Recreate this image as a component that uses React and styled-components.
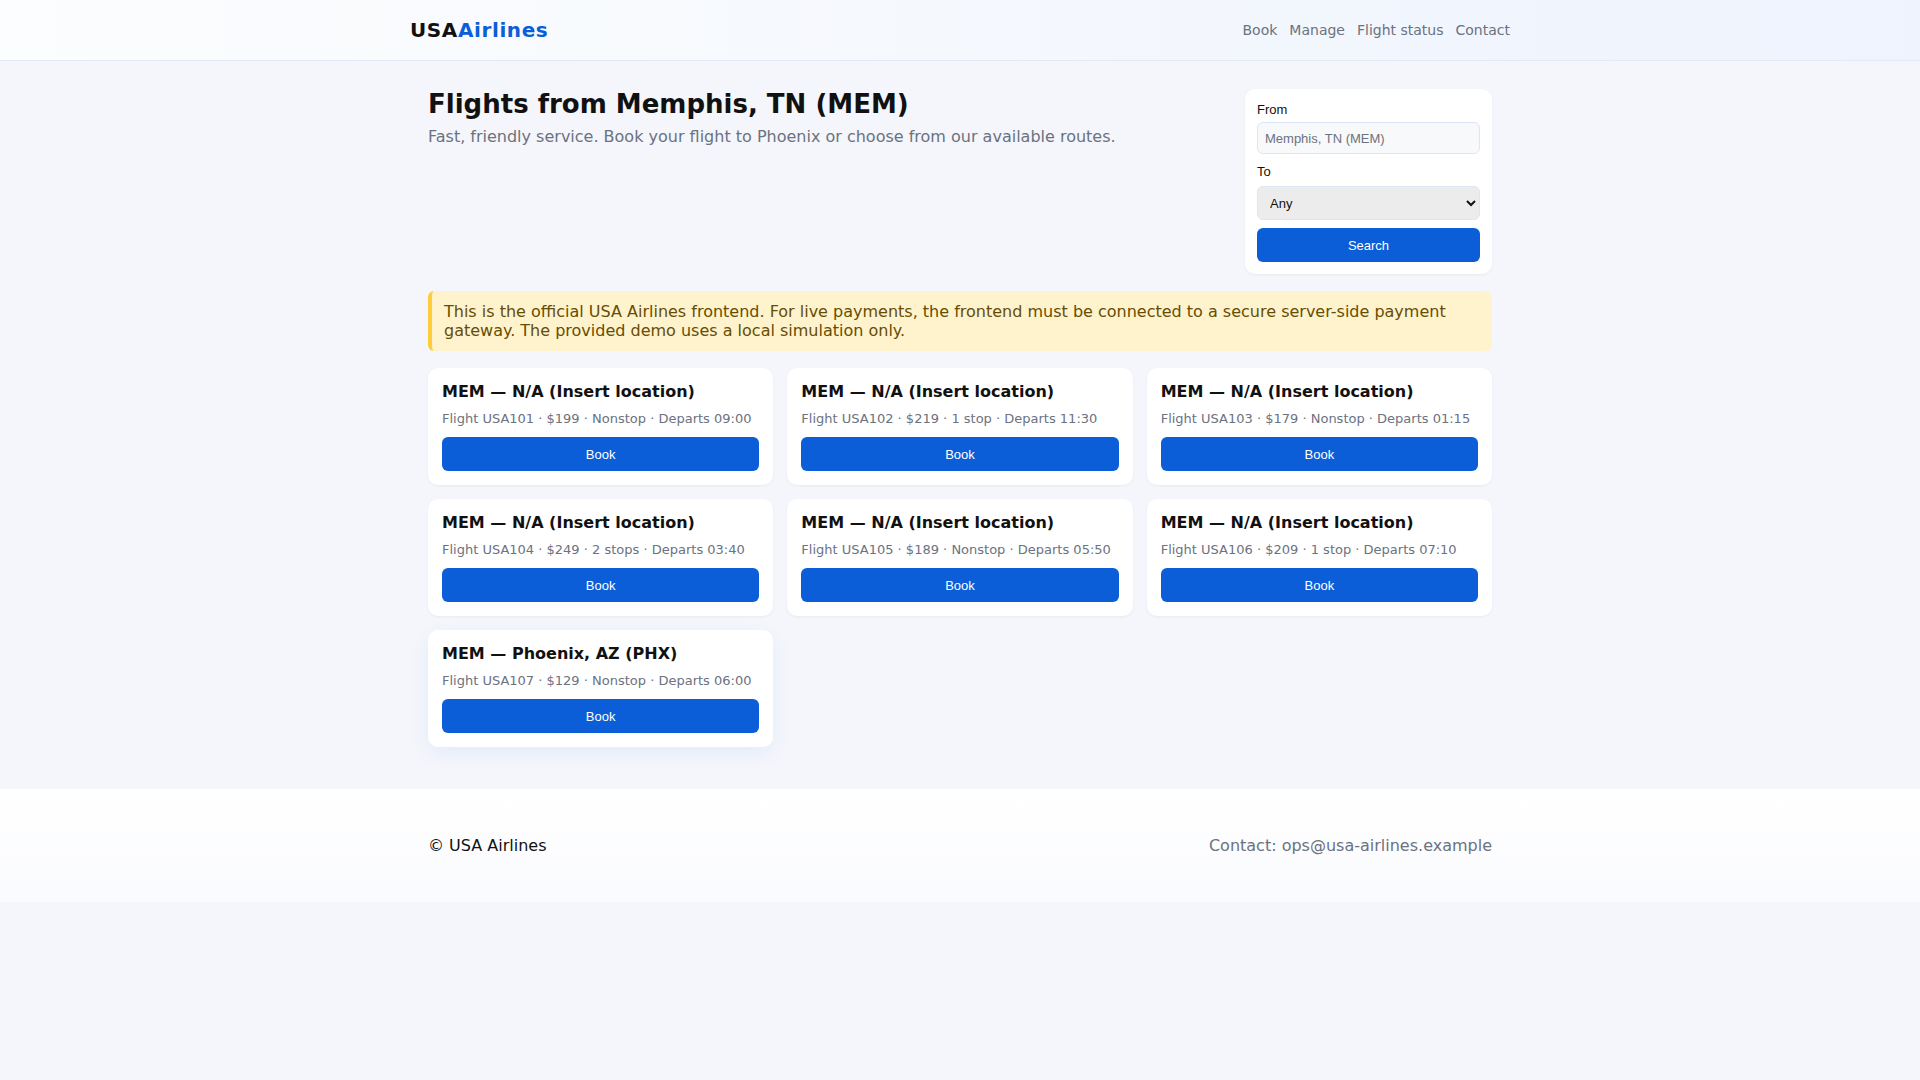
import styled, { createGlobalStyle } from 'styled-components';

const GlobalStyle = createGlobalStyle`
  * { box-sizing: border-box; }
  body {
    margin: 0;
    background: #f4f6fb;
    font-family: "DejaVu Sans", "Noto Sans", sans-serif;
    color: #111;
  }
`;

const Header = styled.header`
  height: 61px;
  background: linear-gradient(90deg, #fcfdfe 0%, #eef3fd 100%);
  border-bottom: 1px solid #e3eaf6;
  nav {
    max-width: 1100px;
    height: 100%;
    margin: 0 auto;
    display: flex;
    align-items: center;
    justify-content: space-between;
  }
`;

const Logo = styled.div`
  font-size: 20px;
  font-weight: 700;
  letter-spacing: 0.6px;
  color: #111;
  span {
    color: #0b5ed7;
  }
`;

const NavLinks = styled.div`
  display: flex;
  gap: 12px;
  a {
    font-size: 14px;
    color: #6b7280;
    text-decoration: none;
  }
`;

const Main = styled.main`
  max-width: 1100px;
  margin: 0 auto;
  padding: 28px 18px 42px;
`;

const Hero = styled.section`
  display: grid;
  grid-template-columns: 1fr 247px;
  column-gap: 24px;
  align-items: start;
  h1 {
    margin: 0;
    font-size: 26px;
    line-height: 31px;
    font-weight: 700;
    color: #111;
  }
  p {
    margin: 6px 0 0;
    font-size: 16px;
    line-height: 22px;
    color: #6b7280;
  }
`;

const SearchCard = styled.form`
  background: #fff;
  border-radius: 10px;
  padding: 12px;
  box-shadow: 0 1px 3px rgba(16, 24, 40, 0.05);
  display: flex;
  flex-direction: column;
  font-family: "Liberation Sans", Arial, sans-serif;
`;

const Label = styled.label`
  display: block;
  font-size: 13px;
  line-height: ${(p) => (p.$first ? '17px' : '18px')};
  color: #111;
  margin: ${(p) => (p.$first ? '0 0 4px' : '9px 0 5px')};
`;

const Input = styled.input`
  height: 32px;
  width: 100%;
  border: 1px solid #dde6f5;
  border-radius: 6px;
  background: #f8f9fa;
  color: #6b7280;
  padding: 0 7px;
  font-family: "Liberation Sans", Arial, sans-serif;
  font-size: 13px;
  outline: none;
`;

const Select = styled.select`
  height: 34px;
  width: 100%;
  border: 1px solid #dde6f5;
  border-radius: 6px;
  background-color: #ececec;
  color: #111;
  padding: 0 8px;
  font-family: "Liberation Sans", Arial, sans-serif;
  font-size: 13px;
`;

const Button = styled.button`
  height: 34px;
  width: 100%;
  border: none;
  border-radius: 6px;
  background: #0b5ed7;
  color: #fff;
  font-family: "Liberation Sans", Arial, sans-serif;
  font-size: 13px;
  cursor: pointer;
  margin-top: ${(p) => p.$mt || '0'};
`;

const Alert = styled.div`
  margin-top: 17px;
  background: #fff3cd;
  border-left: 4px solid #ffcd39;
  border-radius: 6px;
  padding: 11px 12px;
  color: #664d03;
  font-size: 16px;
  line-height: normal;
`;

const Grid = styled.div`
  margin-top: 17px;
  display: grid;
  grid-template-columns: repeat(3, 1fr);
  gap: 14px;
`;

const Card = styled.div`
  background: #fff;
  border-radius: 10px;
  padding: 14px 14px 14px;
  box-shadow: ${(p) =>
    p.$featured
      ? '0 6px 20px rgba(11, 94, 215, 0.07)'
      : '0 1px 3px rgba(16, 24, 40, 0.05)'};
  h3 {
    margin: 0;
    font-size: 16px;
    line-height: 20px;
    font-weight: 700;
    color: #111;
  }
  p {
    margin: 8px 0 9px;
    font-size: 13px;
    line-height: 18px;
    color: #6b7280;
  }
`;

const Footer = styled.footer`
  background: linear-gradient(180deg, #ffffff 0%, #fafbfe 100%);
  padding: 47px 18px;
  div {
    max-width: 1064px;
    margin: 0 auto;
    display: flex;
    justify-content: space-between;
    font-size: 16px;
    line-height: normal;
  }
  span:last-child {
    color: #6b7280;
  }
`;

const flights = [
  { no: 'USA101', to: 'N/A (Insert location)', price: 199, stops: 'Nonstop', time: '09:00' },
  { no: 'USA102', to: 'N/A (Insert location)', price: 219, stops: '1 stop', time: '11:30' },
  { no: 'USA103', to: 'N/A (Insert location)', price: 179, stops: 'Nonstop', time: '01:15' },
  { no: 'USA104', to: 'N/A (Insert location)', price: 249, stops: '2 stops', time: '03:40' },
  { no: 'USA105', to: 'N/A (Insert location)', price: 189, stops: 'Nonstop', time: '05:50' },
  { no: 'USA106', to: 'N/A (Insert location)', price: 209, stops: '1 stop', time: '07:10' },
  { no: 'USA107', to: 'Phoenix, AZ (PHX)', price: 129, stops: 'Nonstop', time: '06:00', featured: true },
];

const App = () => {
  return (
    <>
      <GlobalStyle />
      <Header>
        <nav>
          <Logo>
            USA<span>Airlines</span>
          </Logo>
          <NavLinks>
            <a href="#">Book</a>
            <a href="#">Manage</a>
            <a href="#">Flight status</a>
            <a href="#">Contact</a>
          </NavLinks>
        </nav>
      </Header>
      <Main>
        <Hero>
          <div>
            <h1>Flights from Memphis, TN (MEM)</h1>
            <p>
              Fast, friendly service. Book your flight to Phoenix or choose from
              our available routes.
            </p>
          </div>
          <SearchCard onSubmit={(e) => e.preventDefault()}>
            <Label $first>From</Label>
            <Input readOnly value="Memphis, TN (MEM)" />
            <Label>To</Label>
            <Select defaultValue="any">
              <option value="any">Any</option>
              <option value="phx">Phoenix, AZ (PHX)</option>
            </Select>
            <Button $mt="8px">Search</Button>
          </SearchCard>
        </Hero>
        <Alert>
          This is the official USA Airlines frontend. For live payments, the
          frontend must be connected to a secure server-side payment gateway.
          The provided demo uses a local simulation only.
        </Alert>
        <Grid>
          {flights.map((f) => (
            <Card key={f.no} $featured={f.featured}>
              <h3>MEM — {f.to}</h3>
              <p>
                Flight {f.no} · ${f.price} · {f.stops} · Departs {f.time}
              </p>
              <Button>Book</Button>
            </Card>
          ))}
        </Grid>
      </Main>
      <Footer>
        <div>
          <span>© USA Airlines</span>
          <span>Contact: ops@usa-airlines.example</span>
        </div>
      </Footer>
    </>
  );
};

export default App;
